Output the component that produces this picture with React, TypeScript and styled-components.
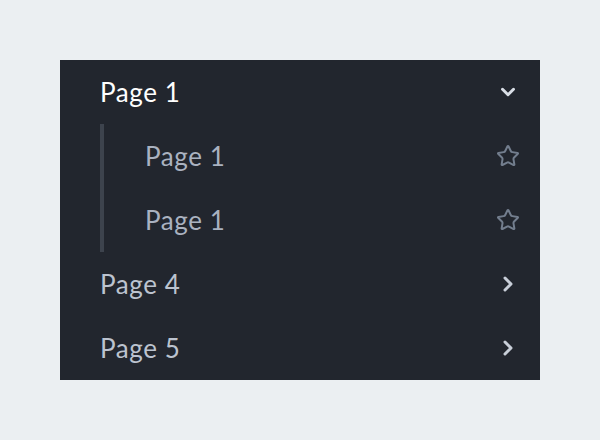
import React from "react";
import styled, { createGlobalStyle } from "styled-components";
import { ChevronDown, ChevronRight, Star } from "lucide-react";

const GlobalStyle = createGlobalStyle`
  html, body {
    margin: 0;
    padding: 0;
    background: #ebeff2;
    font-family: Lato, "Open Sans", sans-serif;
  }
`;

const Page = styled.div`
  width: 600px;
  height: 440px;
  display: flex;
  align-items: center;
  justify-content: center;
`;

const Nav = styled.nav`
  width: 480px;
  background: #22262e;
  display: flex;
  flex-direction: column;
`;

const Row = styled.div<{ $active?: boolean }>`
  height: 64px;
  display: flex;
  align-items: center;
  justify-content: space-between;
  padding: 0 20px 0 40px;
  font-size: 26px;
  letter-spacing: 0.6px;
  color: ${(p) => (p.$active ? "#ffffff" : "#bcc3cf")};
`;

const SubGroup = styled.div`
  margin-left: 40px;
  border-left: 4px solid #3d434d;
  display: flex;
  flex-direction: column;
`;

const SubRow = styled.div`
  height: 64px;
  display: flex;
  align-items: center;
  justify-content: space-between;
  padding: 0 20px 0 41px;
  font-size: 26px;
  letter-spacing: 0.6px;
  color: #aab2c0;
`;

const Icon = styled.span<{ $color: string }>`
  width: 24px;
  height: 24px;
  display: flex;
  align-items: center;
  justify-content: center;
  color: ${(p) => p.$color};
`;

export default function App() {
  return (
    <Page>
      <GlobalStyle />
      <Nav>
        <Row $active>
          Page 1
          <Icon $color="#d9dee6">
            <ChevronDown size={22} strokeWidth={3.2} />
          </Icon>
        </Row>
        <SubGroup>
          <SubRow>
            Page 1
            <Icon $color="#737e8e">
              <Star size={30} strokeWidth={2} />
            </Icon>
          </SubRow>
          <SubRow>
            Page 1
            <Icon $color="#737e8e">
              <Star size={30} strokeWidth={2} />
            </Icon>
          </SubRow>
        </SubGroup>
        <Row>
          Page 4
          <Icon $color="#c8ced8">
            <ChevronRight size={26} strokeWidth={3} />
          </Icon>
        </Row>
        <Row>
          Page 5
          <Icon $color="#c8ced8">
            <ChevronRight size={26} strokeWidth={3} />
          </Icon>
        </Row>
      </Nav>
    </Page>
  );
}
